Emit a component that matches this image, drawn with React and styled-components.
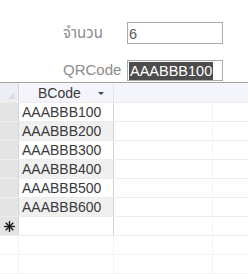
import React from "react";
import styled, { createGlobalStyle } from "styled-components";

const Global = createGlobalStyle`
  html, body { margin: 0; padding: 0; background: #ffffff; }
  body { font-family: "Liberation Sans", Arial, sans-serif; }
`;

const Page = styled.div`
  width: 248px;
  height: 274px;
  overflow: hidden;
  background: #fff;
  display: flex;
  flex-direction: column;
`;

const Form = styled.div`
  display: grid;
  grid-template-columns: 64px 96px;
  grid-auto-rows: 22px;
  row-gap: 15px;
  padding: 22px 0 0 63px;
  height: 68px;
  align-items: center;
`;

const Label = styled.span`
  font-family: "Liberation Sans", "Noto Sans Thai", "Loma", "Garuda", sans-serif;
  font-size: 15px;
  color: #8c8c8c;
  line-height: 22px;
`;

const Input = styled.div`
  box-sizing: border-box;
  height: ${(p) => (p.$short ? 21 : 22)}px;
  border: 1px solid #a9a9a9;
  padding: 1px 1px 0 1px;
  font-size: 14.5px;
  line-height: 18px;
  color: #5a5a5a;
  display: flex;
  align-items: center;
  white-space: nowrap;
  overflow: hidden;
`;

const Selected = styled.span`
  background: #4d4d4d;
  color: #fff;
  padding: 0 1px;
  line-height: 18px;
`;

const Grid = styled.div`
  display: flex;
  flex-direction: column;
  border-top: 1px solid #a3a3a3;
`;

const Row = styled.div`
  display: flex;
  height: ${(p) => (p.$header ? 19 : 18)}px;
  border-bottom: 1px solid ${(p) => (p.$faint ? "#f3f3f3" : "#ececec")};
  background: ${(p) => (p.$header ? "#f3f5fb" : "#fff")};
`;

const Selector = styled.div`
  width: 19px;
  flex: none;
  box-sizing: border-box;
  background: ${(p) => p.$bg || "#e4e4e4"};
  border-right: 1px solid ${(p) => (p.$empty ? "#f3f3f3" : "#d6d6d6")};
  display: flex;
  align-items: center;
  justify-content: center;
  position: relative;
`;

const Corner = styled.div`
  position: absolute;
  right: 3px;
  bottom: 3px;
  width: 0;
  height: 0;
  border-left: 7px solid transparent;
  border-bottom: 7px solid #d9dce3;
`;

const Cell = styled.div`
  width: 95px;
  flex: none;
  box-sizing: border-box;
  border-right: 1px solid ${(p) => (p.$empty ? "#f3f3f3" : "#d2d2d2")};
  background: ${(p) => (p.$alt ? "#f0f0f0" : "transparent")};
  font-size: 14px;
  color: #3a3a3a;
  padding-left: 3px;
  line-height: 18px;
  white-space: nowrap;
`;

const HeaderCell = styled.div`
  width: 95px;
  flex: none;
  box-sizing: border-box;
  border-right: 1px solid #e2e4ea;
  display: flex;
  align-items: center;
  font-size: 14px;
  color: #3a3a3a;
  padding-left: 19px;
  position: relative;
`;

const Arrow = styled.span`
  position: absolute;
  right: 9px;
  top: 9px;
  width: 0;
  height: 0;
  border-left: 3px solid transparent;
  border-right: 3px solid transparent;
  border-top: 3px solid #444;
`;

const Filler = styled.div`
  flex: 1;
  border-right: 1px solid #f4f4f7;
`;

const Tail = styled.div`
  width: 35px;
  flex: none;
`;

const Star = () => (
  <svg width="11" height="11" viewBox="0 0 11 11">
    <g stroke="#1a1a1a" strokeWidth="1.4" strokeLinecap="square">
      <line x1="5.5" y1="0.8" x2="5.5" y2="10.2" />
      <line x1="0.8" y1="5.5" x2="10.2" y2="5.5" />
      <line x1="2.2" y1="2.2" x2="8.8" y2="8.8" />
      <line x1="8.8" y1="2.2" x2="2.2" y2="8.8" />
    </g>
  </svg>
);

const codes = ["AAABBB100", "AAABBB200", "AAABBB300", "AAABBB400", "AAABBB500", "AAABBB600"];

export default function App() {
  return (
    <Page>
      <Global />
      <Form>
        <Label>จำนวน</Label>
        <Input>6</Input>
        <Label>QRCode</Label>
        <Input $short>
          <Selected>AAABBB100</Selected>
        </Input>
      </Form>
      <Grid>
        <Row $header>
          <Selector $bg="#eceef3">
            <Corner />
          </Selector>
          <HeaderCell>
            BCode
            <Arrow />
          </HeaderCell>
          <Filler />
          <Tail />
        </Row>
        {codes.map((c, i) => (
          <Row key={c}>
            <Selector />
            <Cell $alt={i % 2 === 1}>{c}</Cell>
            <Filler />
            <Tail />
          </Row>
        ))}
        <Row>
          <Selector>
            <Star />
          </Selector>
          <Cell />
          <Filler />
          <Tail />
        </Row>
        <Row $faint>
          <Selector $bg="#fff" $empty />
          <Cell $empty />
          <Filler />
          <Tail />
        </Row>
        <Row $faint>
          <Selector $bg="#fff" $empty />
          <Cell $empty />
          <Filler />
          <Tail />
        </Row>
      </Grid>
    </Page>
  );
}
